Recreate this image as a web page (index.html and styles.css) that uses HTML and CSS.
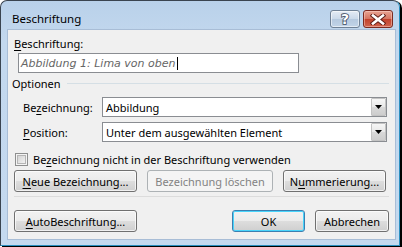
FILE: index.html
```html
<!DOCTYPE html>
<html>
<head>
<meta charset="utf-8">
<link rel="stylesheet" href="styles.css">
</head>
<body>
<div class="window">
  <div class="titlebar">
    <span class="title">Beschriftung</span>
    <div class="caption-btns">
      <div class="cbtn help"><span>?</span></div>
      <div class="cbtn close">
        <svg width="16" height="11" viewBox="0 0 16 11">
          <path d="M3 1.5 L13 9.5 M13 1.5 L3 9.5" stroke="#5a1a14" stroke-width="4.4" stroke-linecap="square" fill="none"/>
          <path d="M3 1.5 L13 9.5 M13 1.5 L3 9.5" stroke="#ffffff" stroke-width="2.6" stroke-linecap="square" fill="none"/>
        </svg>
      </div>
    </div>
  </div>
  <div class="client">
    <div class="main-label"><u>B</u>eschriftung:</div>
    <div class="textbox"><span class="ph">Abbildung 1: Lima von oben</span><span class="caret"></span></div>
    <div class="group-head"><span>Optionen</span><div class="rule"></div></div>
    <div class="field-row">
      <span class="flabel">Be<u>z</u>eichnung:</span>
      <div class="combo"><span class="value">Abbildung</span><div class="drop"><svg width="7" height="4" viewBox="0 0 7 4"><path d="M0 0 H7 L3.5 4 Z" fill="#000"/></svg></div></div>
    </div>
    <div class="field-row">
      <span class="flabel"><u>P</u>osition:</span>
      <div class="combo"><span class="value">Unter dem ausgewählten Element</span><div class="drop"><svg width="7" height="4" viewBox="0 0 7 4"><path d="M0 0 H7 L3.5 4 Z" fill="#000"/></svg></div></div>
    </div>
    <div class="check-row">
      <span class="checkbox"><span class="inner"></span></span>
      <span>Be<u>z</u>eichnung nicht in der Beschriftung verwenden</span>
    </div>
    <div class="btn-row">
      <div class="btn w-neue"><u>N</u>eue Bezeichnung...</div>
      <div class="btn disabled w-del">Bezeichnung löschen</div>
      <div class="btn w-num">N<u>u</u>mmerierung...</div>
    </div>
    <div class="sep"></div>
    <div class="btn-row bottom">
      <div class="btn w-auto"><u>A</u>utoBeschriftung...</div>
      <div class="spacer"></div>
      <div class="btn default w-ok">OK</div>
      <div class="btn w-cancel">Abbrechen</div>
    </div>
  </div>
</div>
</body>
</html>
```

FILE: styles.css
```css
* { box-sizing: border-box; }
html, body { margin: 0; padding: 0; background: #ffffff; }
body {
  font-family: "Noto Sans", "Open Sans", sans-serif;
  font-size: 11px;
  color: #000;
  width: 402px;
  height: 247px;
  overflow: hidden;
}
u { text-decoration: underline; text-underline-offset: 2px; text-decoration-thickness: 1px; }

.window {
  width: 400px;
  height: 246px;
  border: 1px solid #3a4450;
  border-right-color: #2a8fbf;
  border-bottom-color: #2a8fbf;
  border-radius: 7px 7px 0 0;
  box-shadow: 2px 1px 0 #000;
  background: linear-gradient(#b9d1ea, #c3d8ee 40px, #c4d9ef);
  display: flex;
  flex-direction: column;
}

.titlebar {
  height: 28px;
  display: flex;
  align-items: flex-start;
  padding: 0 6px 0 11px;
}
.title {
  margin-top: 10px;
  font-size: 11.5px;
  line-height: 16px;
  color: #000;
}
.caption-btns {
  margin-left: auto;
  margin-top: 9px;
  display: flex;
  gap: 3px;
}
.cbtn {
  height: 18px;
  width: 30px;
  border-radius: 3px;
  display: flex;
  align-items: center;
  justify-content: center;
}
.help {
  border: 1px solid #6f8196;
  background: linear-gradient(#e4ecf5, #cad9ea 50%, #b5c9df 51%, #c2d4e8);
  box-shadow: inset 0 0 0 1px rgba(255,255,255,0.55);
}
.help span {
  font-family: "DejaVu Sans", sans-serif;
  font-weight: bold;
  font-size: 14px;
  line-height: 14px;
  color: #fff;
  -webkit-text-stroke: 1.6px #3d4a5e;
  paint-order: stroke fill;
}
.close {
  border: 1px solid #7b2a20;
  background: linear-gradient(#e8a493, #d4735f 50%, #c2412b 51%, #cf634d);
  box-shadow: inset 0 0 0 1px rgba(255,220,210,0.45);
}

.client {
  margin: 0 3px 0 6px;
  height: 211px;
  background: #f0f0f0;
  border: 1px solid #a8bdd6;
  padding: 6px 6px 0 6px;
  display: flex;
  flex-direction: column;
}

.main-label { line-height: 15px; height: 15px; }

.textbox {
  margin: 2px 0 0 4px;
  width: 281px;
  height: 20px;
  border: 1px solid #8a8d92;
  background: #fff;
  display: flex;
  align-items: center;
  padding-left: 2px;
}
.ph {
  font-family: "DejaVu Sans", sans-serif;
  font-style: italic;
  font-size: 11px;
  color: #666;
}
.caret {
  display: inline-block;
  width: 1px;
  height: 13px;
  background: #000;
  margin-left: 1px;
}

.group-head {
  margin: 3px 0 0 -2px;
  height: 15px;
  display: flex;
  align-items: center;
  line-height: 15px;
}
.group-head .rule {
  flex: 1;
  height: 1px;
  background: #d5dfe5;
  margin: 0 0 0 6px;
}

.field-row {
  margin-top: 6px;
  height: 20px;
  display: flex;
  align-items: center;
  padding-left: 9px;
}
.field-row + .field-row { margin-top: 5px; }
.flabel { width: 79px; line-height: 15px; }
.combo {
  width: 285px;
  height: 20px;
  border: 1px solid #8a8d92;
  background: #fff;
  display: flex;
  align-items: center;
  padding-left: 3px;
}
.combo .value { flex: 1; line-height: 15px; }
.drop {
  width: 15px;
  height: 18px;
  border: 1px solid #c3c3c3;
  border-radius: 1px;
  background: linear-gradient(#f6f6f6, #e8e8e8 50%, #d9d9d9 51%, #cdcdcd);
  display: flex;
  align-items: center;
  justify-content: center;
}

.check-row {
  margin-top: 11px;
  height: 13px;
  display: flex;
  align-items: center;
  padding-left: 1px;
  line-height: 15px;
}
.checkbox {
  width: 13px;
  height: 13px;
  border: 1px solid #8e8f8f;
  background: #f4f4f4;
  padding: 1px;
  margin-right: 5px;
}
.checkbox .inner {
  display: block;
  width: 9px;
  height: 9px;
  border: 1px solid #b5b5b5;
  background: linear-gradient(135deg, #d4d4d4, #f2f2f2);
}

.btn-row {
  margin-top: 4px;
  display: flex;
  gap: 10px;
}
.btn {
  height: 22px;
  border: 1px solid #707070;
  border-radius: 3px;
  background: linear-gradient(#f2f2f2, #ebebeb 50%, #dddddd 51%, #cfcfcf);
  box-shadow: inset 0 0 0 1px rgba(255,255,255,0.7);
  display: flex;
  align-items: center;
  justify-content: center;
  line-height: 15px;
  white-space: nowrap;
}
.btn.disabled {
  border-color: #adb2b5;
  background: #f4f4f4;
  box-shadow: none;
  color: #838383;
}
.btn.default {
  border-color: #3c7fb1;
  box-shadow: inset 0 0 0 1px #48d4fb;
}
.w-neue { width: 123px; }
.w-del { width: 126px; }
.w-num { width: 103px; }
.w-auto { width: 123px; }
.w-ok { width: 73px; }
.w-cancel { width: 74px; }
.spacer { flex: 1; }
.btn-row.bottom { margin-top: 13px; }

.sep {
  margin-top: 4px;
  height: 1px;
  background: #dcdcdc;
}
```
